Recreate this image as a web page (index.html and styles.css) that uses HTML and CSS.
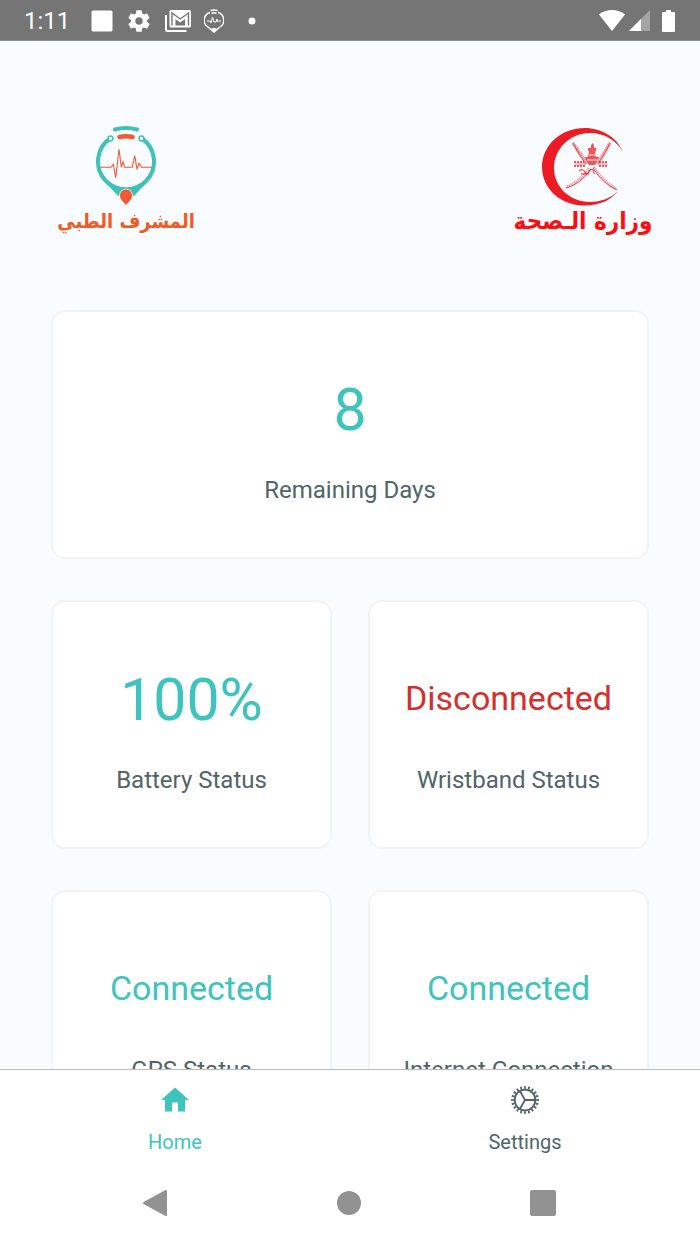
FILE: index.html
```
<!DOCTYPE html>
<html lang="en">
<head>
    <meta charset="UTF-8">
    <meta name="viewport" content="width=device-width, initial-scale=1">
    <title>Home</title>
    <link rel="stylesheet" href="styles.css">
</head>
<body>
<div class="status-bar">
    <span class="time">1:11</span>
    <div class="notices">
        <svg width="22" height="22" viewBox="0 0 22 22"><rect x="0.5" y="0.5" width="21" height="21" rx="1.5" fill="#fff"/></svg>
        <svg width="26" height="26" viewBox="0 0 24 24"><path fill="#fff" d="M19.43 12.98c.04-.32.07-.64.07-.98s-.03-.66-.07-.98l2.11-1.65c.19-.15.24-.42.12-.64l-2-3.46c-.12-.22-.39-.3-.61-.22l-2.49 1c-.52-.4-1.08-.73-1.69-.98l-.38-2.65C14.46 2.18 14.25 2 14 2h-4c-.25 0-.46.18-.49.42l-.38 2.65c-.61.25-1.17.59-1.69.98l-2.49-1c-.23-.09-.49 0-.61.22l-2 3.46c-.13.22-.07.49.12.64l2.11 1.65c-.04.32-.07.65-.07.98s.03.66.07.98l-2.11 1.65c-.19.15-.24.42-.12.64l2 3.46c.12.22.39.3.61.22l2.49-1c.52.4 1.08.73 1.69.98l.38 2.65c.03.24.24.42.49.42h4c.25 0 .46-.18.49-.42l.38-2.65c.61-.25 1.17-.59 1.69-.98l2.49 1c.23.09.49 0 .61-.22l2-3.46c.12-.22.07-.49-.12-.64l-2.11-1.65zM12 15.500c-1.930 0-3.500-1.570-3.500-3.500s1.570-3.500 3.500-3.500 3.500 1.570 3.500 3.500-1.570 3.500-3.500 3.500z"/></svg>
        <svg width="26" height="22" viewBox="0 0 26 22"><path d="M1 5v14.500q0 1.500 1.500 1.500H21.500" fill="none" stroke="#fff" stroke-width="2"/><rect x="4.500" width="21.500" height="17.500" rx="1.500" fill="#fff"/><path d="M7 15.500V3l8.200 6L23.500 3v12.500" fill="none" stroke="#757575" stroke-width="1.400"/><path d="M10.500 15.500V9l4.700 3.500L20 9v6.500z" fill="#757575"/></svg>
        <svg width="20" height="24" viewBox="0 0 20 24" fill="none" stroke="#fff"><path d="M6 3.500A8 8 0 0 0 4 18l6 5 6-5A8 8 0 0 0 14 3.500" stroke-width="1.400"/><path d="M6.500 1.500q3.500-1 7 0M7.500 4.200q2.500-.7 5 0" stroke-width="1.500"/><path d="M3 12h3l1 2 1.500-6 1.500 5h2l1-3 1 3 1-1h2" stroke-width="1"/><path d="M8 19.500h4l-2 3z" fill="#fff"/></svg>
        <svg width="8" height="8" viewBox="0 0 8 8"><circle cx="4" cy="4" r="3.500" fill="#fff"/></svg>
    </div>
    <div class="signals">
        <svg width="26" height="21" viewBox="0 0 26 21"><path d="M13 21 0 4.500C7-1.500 19-1.500 26 4.500z" fill="#fff"/></svg>
        <svg width="21" height="21" viewBox="0 0 21 21"><path d="M21 0v21H0z" fill="#a4a4a4"/><path d="M12 9v12H0z" fill="#fff"/></svg>
        <svg width="13" height="22" viewBox="0 0 13 22"><path d="M4 0h5v2h3q1 0 1 1v18q0 1-1 1H1q-1 0-1-1V3q0-1 1-1h3z" fill="#fff"/></svg>
    </div>
</div>

<main class="content">
    <header class="logos">
        <div class="logo">
            <svg width="62" height="82" viewBox="0 0 62 82">
                <path d="M2 46Q6 54 23 72l8-4 8 4Q56 54 60 46L31 60z" fill="#3fc1b9"/>
                <circle cx="31" cy="37" r="26.500" fill="#f9fcff"/>
                <path d="M15 14.500a28 28 0 1 0 32 0" fill="none" stroke="#3fc1b9" stroke-width="4"/>
                <circle cx="15.500" cy="14.500" r="2.400" fill="#fff" stroke="#3fc1b9" stroke-width="1.500"/>
                <circle cx="46.500" cy="14.500" r="2.400" fill="#fff" stroke="#3fc1b9" stroke-width="1.500"/>
                <path d="M20 5.500q11-3 22 0" fill="none" stroke="#3fc1b9" stroke-width="4.200" stroke-linecap="round"/>
                <path d="M24.500 13q6.500-1.600 13 0" fill="none" stroke="#f15a35" stroke-width="4.600" stroke-linecap="round"/>
                <path d="M5 43.300h11l2.300-3 2.400 13.400L24 25.300l2.300 18 1.700-5.600 1.600 5.600h7.700l2.400-11.600L42 45.300l2-6 2.700 4H57" fill="none" stroke="#f15a35" stroke-width="1.100"/>
                <path d="M31 81.500c-2-3-6.500-5.500-6.500-10a6.500 6.500 0 0 1 13 0c0 4.500-4.500 7-6.500 10z" fill="#f15a35" stroke="#f9fcff" stroke-width=".8"/>
            </svg>
            <span class="logo-name orange" lang="ar" dir="rtl">المشرف الطبي</span>
        </div>
        <div class="logo">
            <svg width="84" height="82" viewBox="0 -4 84 82">
                <path d="M82 24C76 9 60 0 44 0 20 0 1 17 1 39s19 38.500 42 38.500c16 0 27-5.500 34-14.500-7 7-17 11-28 11-20 0-36-15-36-34S29 5 49 5c15 0 27 8 33 19z" fill="#ed1c24"/>
                <g fill="none" stroke="#ed1c24">
                    <path d="M32 15q7 11 14 20M69 15q-6 11-13 20" stroke-width="3.500" stroke-dasharray="1 .8" opacity=".6"/>
                    <path d="M32 15q5 11 13 21M69 15q-5 11-12 21" stroke-width=".8"/>
                    <path d="M53 39q9 14 22 22M48 40q-9 14-23 19" stroke-width="3" stroke-dasharray="1 1" opacity=".5"/>
                    <path d="M52 40q9 15 24 22M50 41q-10 15-25 19" stroke-width=".8"/>
                    <path d="M33 34h10M33 38h11M58 34h9M58 38h9" stroke-width="1.500" stroke-dasharray="2 1"/>
                    <path d="M34 36h10M57 36h9" stroke-width="1" opacity=".6"/>
                    <path d="M38 43q4-3 6 1t5-2q4-2 4 4M40 46h8" stroke-width="1"/>
                </g>
                <path d="M50 17l1.500-2 1.500 2v3h2v3h-1l1 6h3l-1 3-3 5h-6l-3-5-1-3h3l1-6h-1v-3h3z" fill="#ed1c24" opacity=".75"/>
                <path d="M48 27h7M46 32h11" stroke="#f9fcff"/>
            </svg>
            <span class="logo-name red" lang="ar" dir="rtl">وزارة الـصحة</span>
        </div>
    </header>

    <section class="cards">
        <div class="card wide">
            <p class="value number">8</p>
            <p class="label">Remaining Days</p>
        </div>
        <div class="card">
            <p class="value number">100%</p>
            <p class="label">Battery Status</p>
        </div>
        <div class="card">
            <p class="value off">Disconnected</p>
            <p class="label">Wristband Status</p>
        </div>
        <div class="card">
            <p class="value">Connected</p>
            <p class="label">GPS Status</p>
        </div>
        <div class="card">
            <p class="value">Connected</p>
            <p class="label">Internet Connection</p>
        </div>
    </section>
</main>

<nav class="tabs">
    <a class="tab active" href="#home">
        <svg width="28" height="28" viewBox="0 0 28 28"><path d="M14 1.500 28 14h-4v11.500h-7v-9h-6v9H4V14H0z" fill="currentColor"/></svg>
        <span>Home</span>
    </a>
    <a class="tab" href="#settings">
        <svg width="28" height="28" viewBox="0 0 28 28" fill="none" stroke="currentColor">
            <circle cx="14" cy="14" r="10.300" stroke-width="1.800"/>
            <circle cx="14" cy="14" r="12.400" stroke-width="3" pathLength="40" stroke-dasharray=".9 1.100" stroke-dashoffset=".45"/>
            <path d="M14 14h10M14 14 9 5.300M14 14 9 22.700" stroke-width="1.800"/>
        </svg>
        <span>Settings</span>
    </a>
</nav>

<div class="system-nav">
    <button type="button" aria-label="Back"><svg width="26" height="28" viewBox="0 0 26 28"><path d="M2 14 24 2v24z" fill="#929292" stroke="#929292" stroke-width="2" stroke-linejoin="round"/></svg></button>
    <button type="button" aria-label="Home screen"><svg width="24" height="24" viewBox="0 0 24 24"><circle cx="12" cy="12" r="12" fill="#929292"/></svg></button>
    <button type="button" aria-label="Recent apps"><svg width="26" height="26" viewBox="0 0 26 26"><rect width="26" height="26" rx="2" fill="#929292"/></svg></button>
</div>
</body>
</html>
```
FILE: styles.css
```
*{
    margin: 0;
    padding: 0;
    box-sizing: border-box;
}
body{
    display: flex;
    flex-direction: column;
    height: 100vh;
    font-family: Roboto, "Liberation Sans", sans-serif;
    color: #506568;
    background: #f9fcff;
}
svg{
    display: block;
}

/* top status bar */
.status-bar{
    display: flex;
    align-items: center;
    flex: none;
    height: 41px;
    padding: 1px 25px 0 24px;
    background: #757575;
    border-bottom: 1px solid #8a8c8d;
    color: #fff;
}
.time{
    font-size: 24px;
    line-height: 28px;
}
.notices{
    display: flex;
    align-items: center;
    gap: 13px;
    margin-left: 21px;
}
.notices svg:last-child{
    margin-left: 11px;
}
.signals{
    display: flex;
    align-items: center;
    gap: 4px;
    margin-left: auto;
}
.signals svg:last-child{
    margin-left: 8px;
}

/* scrolling part */
.content{
    flex: 1;
    min-height: 0;
    overflow: hidden;
}
.logos{
    display: flex;
    justify-content: space-between;
    padding: 83px 47px 74px 56px;
}
.logo{
    display: flex;
    flex-direction: column;
    align-items: center;
    width: 140px;
}
.logo-name{
    font-family: "DejaVu Sans Condensed", "DejaVu Sans", sans-serif;
    font-weight: bold;
    line-height: 30px;
    white-space: nowrap;
}
.orange{
    font-size: 20px;
    color: #f15a24;
}
.red{
    font-size: 24px;
    color: #fb0d12;
}
.cards{
    display: grid;
    grid-template-columns: 1fr 1fr;
    gap: 41px 36px;
    padding: 0 51px 41px;
}
.card{
    padding: 62px 10px 53px;
    border: 2px solid #f2f3f4;
    border-radius: 14px;
    background: #fff;
    text-align: center;
}
.wide{
    grid-column: 1 / -1;
}
.value{
    margin-bottom: 34px;
    font-size: 34px;
    line-height: 68px;
    color: #3fc4bd;
}
.number{
    margin-bottom: 30px;
    font-size: 59px;
    line-height: 72px;
}
.off{
    color: #d32f2f;
}
.label{
    font-size: 24px;
    line-height: 28px;
    white-space: nowrap;
}

/* bottom tabs */
.tabs{
    display: flex;
    flex: none;
    border-top: 1px solid #b8bcbc;
    background: #fff;
}
.tab{
    display: flex;
    flex: 1;
    flex-direction: column;
    align-items: center;
    gap: 16px;
    padding: 16px 0 8px;
    font-size: 20px;
    line-height: 24px;
    color: #506568;
    text-decoration: none;
}
.tab.active{
    color: #3fc4bd;
}
.system-nav{
    display: grid;
    grid-template-columns: repeat(3, 1fr);
    flex: none;
    height: 82px;
    padding: 0 60px 0 58px;
    background: #fff;
}
.system-nav button{
    display: flex;
    align-items: center;
    justify-content: center;
    border: 0;
    background: none;
}
```
